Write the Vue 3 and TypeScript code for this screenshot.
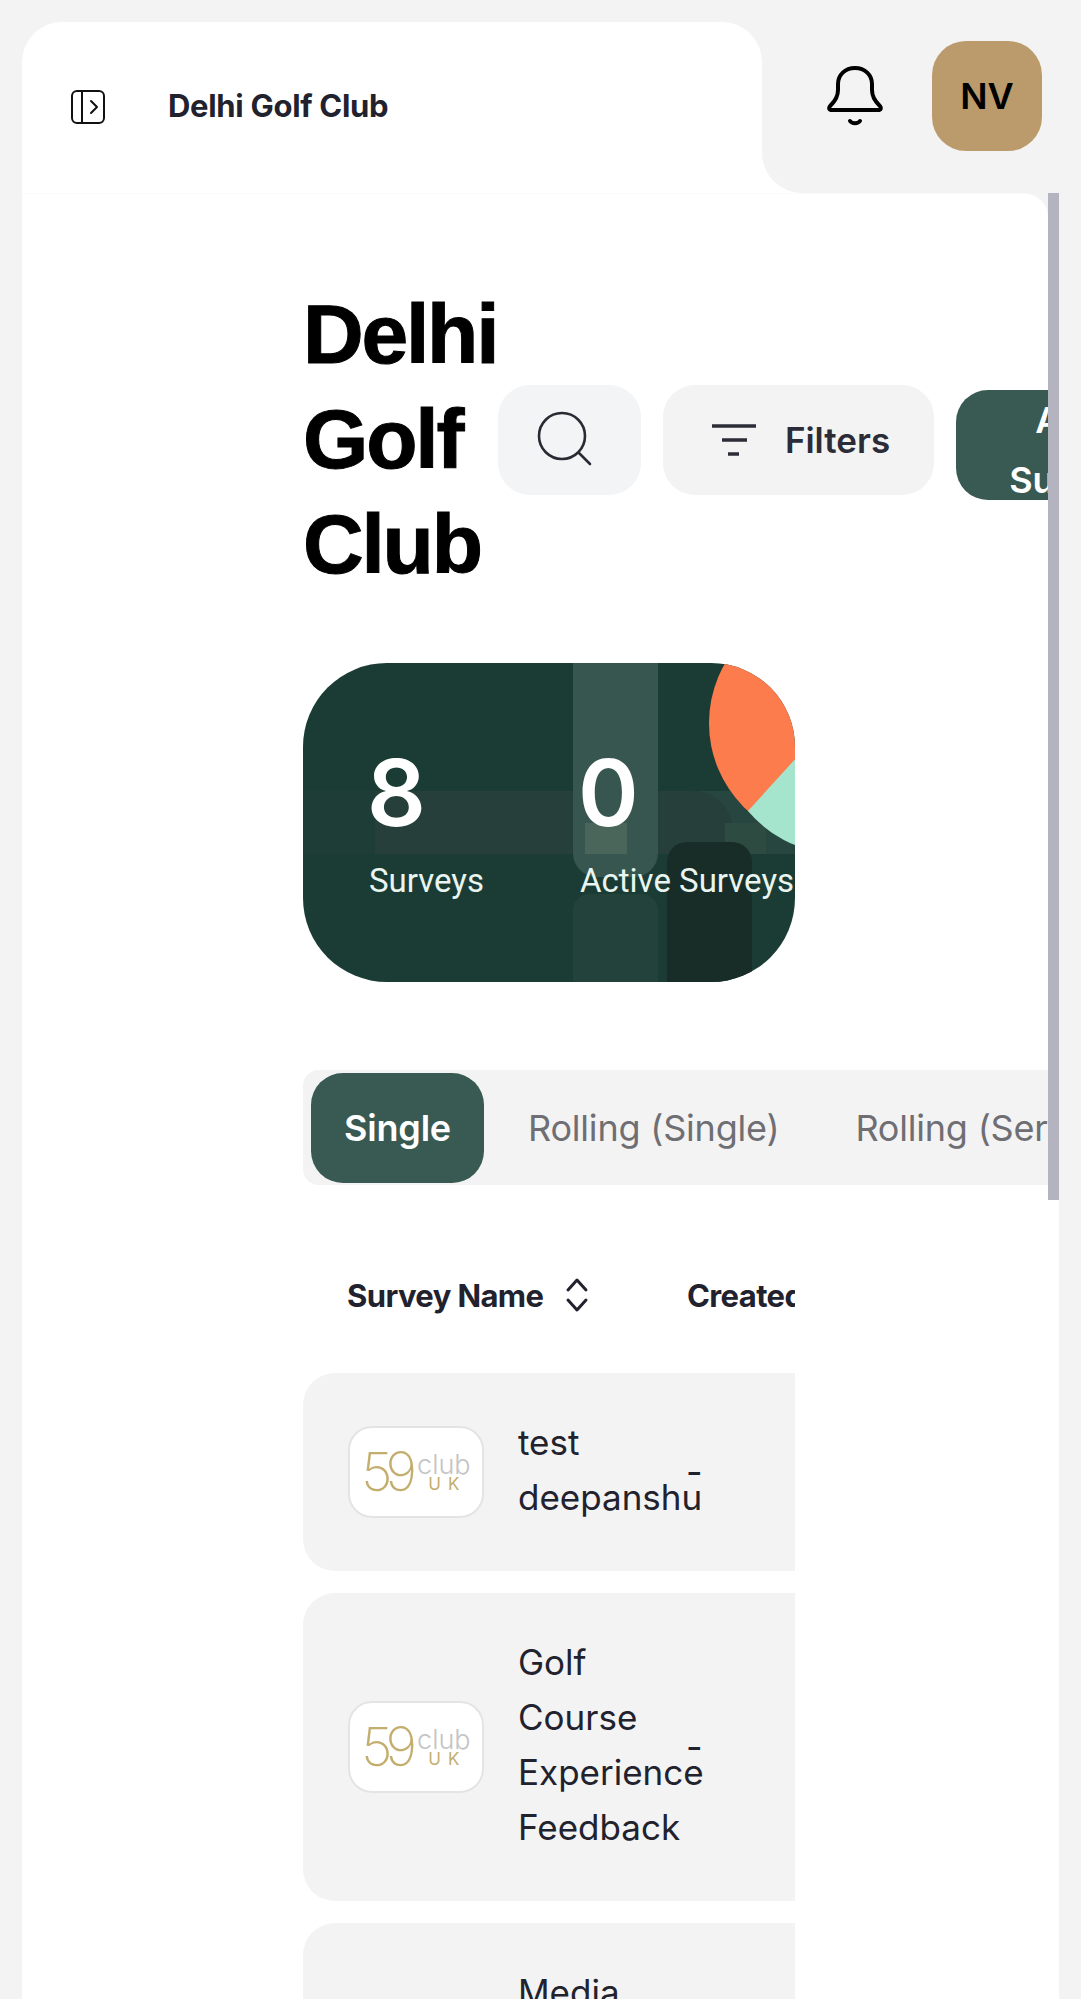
<template>
  <div class="page">
    <header class="topbar">
      <div class="topbar-left">
        <svg class="side-icon" width="36" height="36" viewBox="0 0 36 36" fill="none" stroke="#111" stroke-width="2">
          <rect x="2" y="2" width="32" height="32" rx="5" />
          <path d="M12 2v32" />
          <path d="M21 12l6 6-6 6" stroke-linecap="round" stroke-linejoin="round" />
        </svg>
        <span class="club-name">Delhi Golf Club</span>
      </div>
      <div class="topbar-right">
        <svg class="bell" width="58" height="62" viewBox="0 0 58 62" fill="none" stroke="#000" stroke-width="4" stroke-linejoin="round" stroke-linecap="round">
          <path d="M29 3C19 3 12 10 12 19V25C12 32 9 36 5 40C2 43 3 45 6 45H52C55 45 56 43 53 40C49 36 46 32 46 25V19C46 10 39 3 29 3Z" />
          <path d="M24 56C26 59 32 59 34 56" />
        </svg>
        <div class="avatar">NV</div>
      </div>
    </header>

    <main class="card">
      <div class="scroller">
        <section class="head-row">
          <h1 class="title">Delhi Golf Club</h1>
          <button class="btn search">
            <svg width="60" height="60" viewBox="0 0 60 60" fill="none" stroke="#2a2a35" stroke-width="2.6" stroke-linecap="round">
              <circle cx="26" cy="26" r="23" />
              <path d="M43 43l11 11" />
            </svg>
          </button>
          <button class="btn filters">
            <svg width="44" height="32" viewBox="0 0 44 32" fill="none" stroke="#2c2c38" stroke-width="3.4">
              <path d="M0 2h44M10 16h25M16 30h11" />
            </svg>
            <span>Filters</span>
          </button>
          <button class="btn add">Add<br />Survey</button>
        </section>

        <section class="stats">
          <svg class="stats-art" width="492" height="319" viewBox="0 0 492 319">
            <rect x="0" y="128" width="72" height="63" fill="#1f3d37" />
            <path d="M72 128h318a40 40 0 0 1 40 40v23H72z" fill="#273f3a" />
            <path d="M390 128h102v63h-62v-23a40 40 0 0 0-40-40z" fill="#27463f" />
            <path d="M270 0h85v190a24 24 0 0 1-24 24h-37a24 24 0 0 1-24-24z" fill="#385650" />
            <rect x="282" y="160" width="42" height="31" fill="#4a655a" />
            <path d="M270 319v-72a16 16 0 0 1 16-16h53a16 16 0 0 1 16 16v72z" fill="#22423b" />
            <rect x="422" y="160" width="41" height="31" fill="#2e4b41" />
            <path d="M364 319V199a20 20 0 0 1 20-20h45a20 20 0 0 1 20 20v120z" fill="#182d27" />
            <circle cx="525" cy="60" r="119" fill="#fc7c4d" />
            <path d="M445 148 L525 60 L525 190 A119 119 0 0 1 445 148z" fill="#a6e5cd" />
          </svg>
          <div class="stat s1">
            <div class="num">8</div>
            <div class="lab">Surveys</div>
          </div>
          <div class="stat s2">
            <div class="num">0</div>
            <div class="lab">Active Surveys</div>
          </div>
        </section>

        <nav class="tabs">
          <span class="tab on">Single</span>
          <span class="tab">Rolling (Single)</span>
          <span class="tab">Rolling (Series)</span>
        </nav>

        <section class="table">
          <div class="thead">
            <span class="th first">
              Survey Name
              <svg width="24" height="36" viewBox="0 0 24 36" fill="none" stroke="#22222e" stroke-width="3" stroke-linecap="round" stroke-linejoin="round">
                <path d="M3 13l9-10 9 10M3 23l9 10 9-10" />
              </svg>
            </span>
            <span class="th">Created</span>
          </div>
          <div v-for="row in rows" :key="row.name" class="row">
            <div class="logo">
              <span class="l59">59</span>
              <span class="lr">
                <span class="lclub">club</span>
                <span class="luk">UK</span>
              </span>
            </div>
            <div class="name">
              <span v-for="w in row.name.split(' ')" :key="w">{{ w }}</span>
            </div>
            <div class="dash">-</div>
          </div>
        </section>
      </div>
      <div class="track">
        <div class="thumb"></div>
      </div>
    </main>
  </div>
</template>

<script setup lang="ts">
const rows = [
  { name: 'test deepanshu' },
  { name: 'Golf Course Experience Feedback' },
  { name: 'Media Day Survey' }
]
</script>

<style>
html, body {
  margin: 0;
  background: #f3f3f3;
}
</style>

<style scoped>
.page {
  height: 1999px;
  overflow: hidden;
  box-sizing: border-box;
  padding: 22px 0 0 22px;
  background: #f3f3f3;
  font-family: Inter, "Liberation Sans", sans-serif;
  color: #22222e;
}

.topbar {
  display: flex;
  height: 171px;
  width: 1037px;
  background: linear-gradient(to bottom, #f3f3f3 50%, #fff 50%);
}

.topbar-left {
  width: 740px;
  display: flex;
  align-items: center;
  padding-left: 48px;
  padding-bottom: 2px;
  box-sizing: border-box;
  background: #fff;
  border-radius: 40px 40px 0 0;
}

.side-icon {
  margin-top: 1px;
}

.club-name {
  margin-left: 62px;
  margin-top: -2px;
  font-size: 31px;
  font-weight: 700;
  letter-spacing: -0.3px;
}

.topbar-right {
  flex: 1;
  display: flex;
  align-items: flex-start;
  background: #f3f3f3;
  border-bottom-left-radius: 40px;
  padding-left: 64px;
  box-sizing: border-box;
}

.bell {
  margin-top: 43px;
}

.avatar {
  margin: 19px 0 0 48px;
  width: 110px;
  height: 110px;
  border-radius: 34px;
  background: #bb9b6b;
  color: #000;
  font-size: 36px;
  font-weight: 600;
  display: flex;
  align-items: center;
  justify-content: center;
}

.card {
  display: flex;
  width: 1037px;
  height: 1806px;
}

.scroller {
  flex: 1;
  min-width: 0;
  overflow: hidden;
  background: #fff;
  border-top-right-radius: 24px;
  border-top: 1px solid #fafafa;
  box-sizing: border-box;
  padding: 88px 0 0 281px;
}

.track {
  flex: none;
  width: 11px;
  background: #fff;
}

.thumb {
  height: 1007px;
  background: #b4b4c0;
}

.head-row {
  display: flex;
  align-items: center;
  gap: 22px;
  width: 1000px;
}

.title {
  margin: 0 -22px 0 0;
  width: 195px;
  flex: none;
  font-family: "Liberation Sans", Arial, sans-serif;
  font-size: 84px;
  line-height: 105px;
  font-weight: 700;
  letter-spacing: -2.2px;
  color: #000;
  -webkit-text-stroke: 1px #000;
}

.btn {
  flex: none;
  border: 0;
  height: 110px;
  border-radius: 32px;
  font-family: inherit;
  display: flex;
  align-items: center;
  justify-content: center;
  padding: 0;
}

.search {
  width: 143px;
  padding-right: 7px;
  background: #f3f4f6;
}

.filters {
  width: 271px;
  gap: 29px;
  padding-left: 5px;
  background: #f3f3f3;
  color: #2c2c38;
  font-size: 35px;
  font-weight: 600;
}

.add {
  width: 226px;
  margin-top: 11px;
  padding-bottom: 10px;
  padding-left: 3px;
  background: #385a52;
  color: #fff;
  font-size: 36px;
  font-weight: 600;
  line-height: 60px;
  text-align: center;
  display: block;
}

.stats {
  position: relative;
  width: 492px;
  height: 319px;
  margin: 66px 0 0;
  background: #1b3c35;
  border-radius: 84px;
  overflow: hidden;
  display: flex;
  padding: 80px 0 0 66px;
  box-sizing: border-box;
}

.stats-art {
  position: absolute;
  inset: 0;
}

.stat {
  position: relative;
  flex: none;
}

.s1 {
  width: 211px;
}

.num {
  margin-left: -2px;
  font-size: 92px;
  line-height: 100px;
  font-weight: 600;
  color: #fff;
}

.lab {
  margin-top: 18px;
  font-family: Roboto, sans-serif;
  font-size: 33px;
  line-height: 40px;
  color: #e9f5f0;
  white-space: nowrap;
}

.tabs {
  display: flex;
  align-items: center;
  margin-top: 88px;
  width: 800px;
  height: 115px;
  padding-left: 8px;
  box-sizing: border-box;
  background: #f3f3f3;
  border-radius: 16px;
  font-size: 36px;
  letter-spacing: -0.2px;
}

.tab {
  flex: none;
  color: #6e6e73;
  padding-right: 76px;
  white-space: nowrap;
}

.tab.on {
  width: 173px;
  height: 110px;
  padding: 0;
  margin-right: 44px;
  background: #385a52;
  color: #fff;
  font-weight: 600;
  border-radius: 32px;
  display: flex;
  align-items: center;
  justify-content: center;
}

.table {
  width: 492px;
  overflow: hidden;
}

.thead {
  display: flex;
  align-items: center;
  height: 164px;
  padding: 8px 0 0 44px;
  margin-top: 24px;
  box-sizing: border-box;
}

.th {
  flex: none;
  display: flex;
  align-items: center;
  gap: 22px;
  font-size: 31px;
  font-weight: 700;
  letter-spacing: -0.6px;
  white-space: nowrap;
}

.th.first {
  width: 340px;
}

.row {
  display: flex;
  align-items: center;
  width: 800px;
  padding: 44px 0 44px 45px;
  box-sizing: border-box;
  margin-bottom: 22px;
  background: #f3f3f3;
  border-radius: 32px;
}

.logo {
  flex: none;
  width: 136px;
  height: 92px;
  box-sizing: border-box;
  background: #fff;
  border: 2px solid #e4e4e4;
  border-radius: 24px;
  display: flex;
  align-items: center;
  justify-content: center;
}

.l59 {
  font-size: 54px;
  line-height: 50px;
  font-weight: 200;
  letter-spacing: -7px;
  color: #c4ae6e;
  margin-right: 7px;
  margin-left: 0;
}

.lr {
  display: flex;
  flex-direction: column;
  align-items: center;
}

.lclub {
  font-size: 27px;
  line-height: 24px;
  font-weight: 300;
  color: #c4c4c4;
}

.luk {
  font-size: 17px;
  line-height: 14px;
  letter-spacing: 7px;
  margin-right: -7px;
  color: #c4ae6e;
}

.name {
  flex: none;
  width: 168px;
  margin: -2px 0 2px 34px;
  font-size: 35px;
  line-height: 55px;
  display: flex;
  flex-direction: column;
  white-space: nowrap;
}

.dash {
  flex: none;
  position: relative;
  font-size: 36px;
  line-height: 36px;
}
</style>
